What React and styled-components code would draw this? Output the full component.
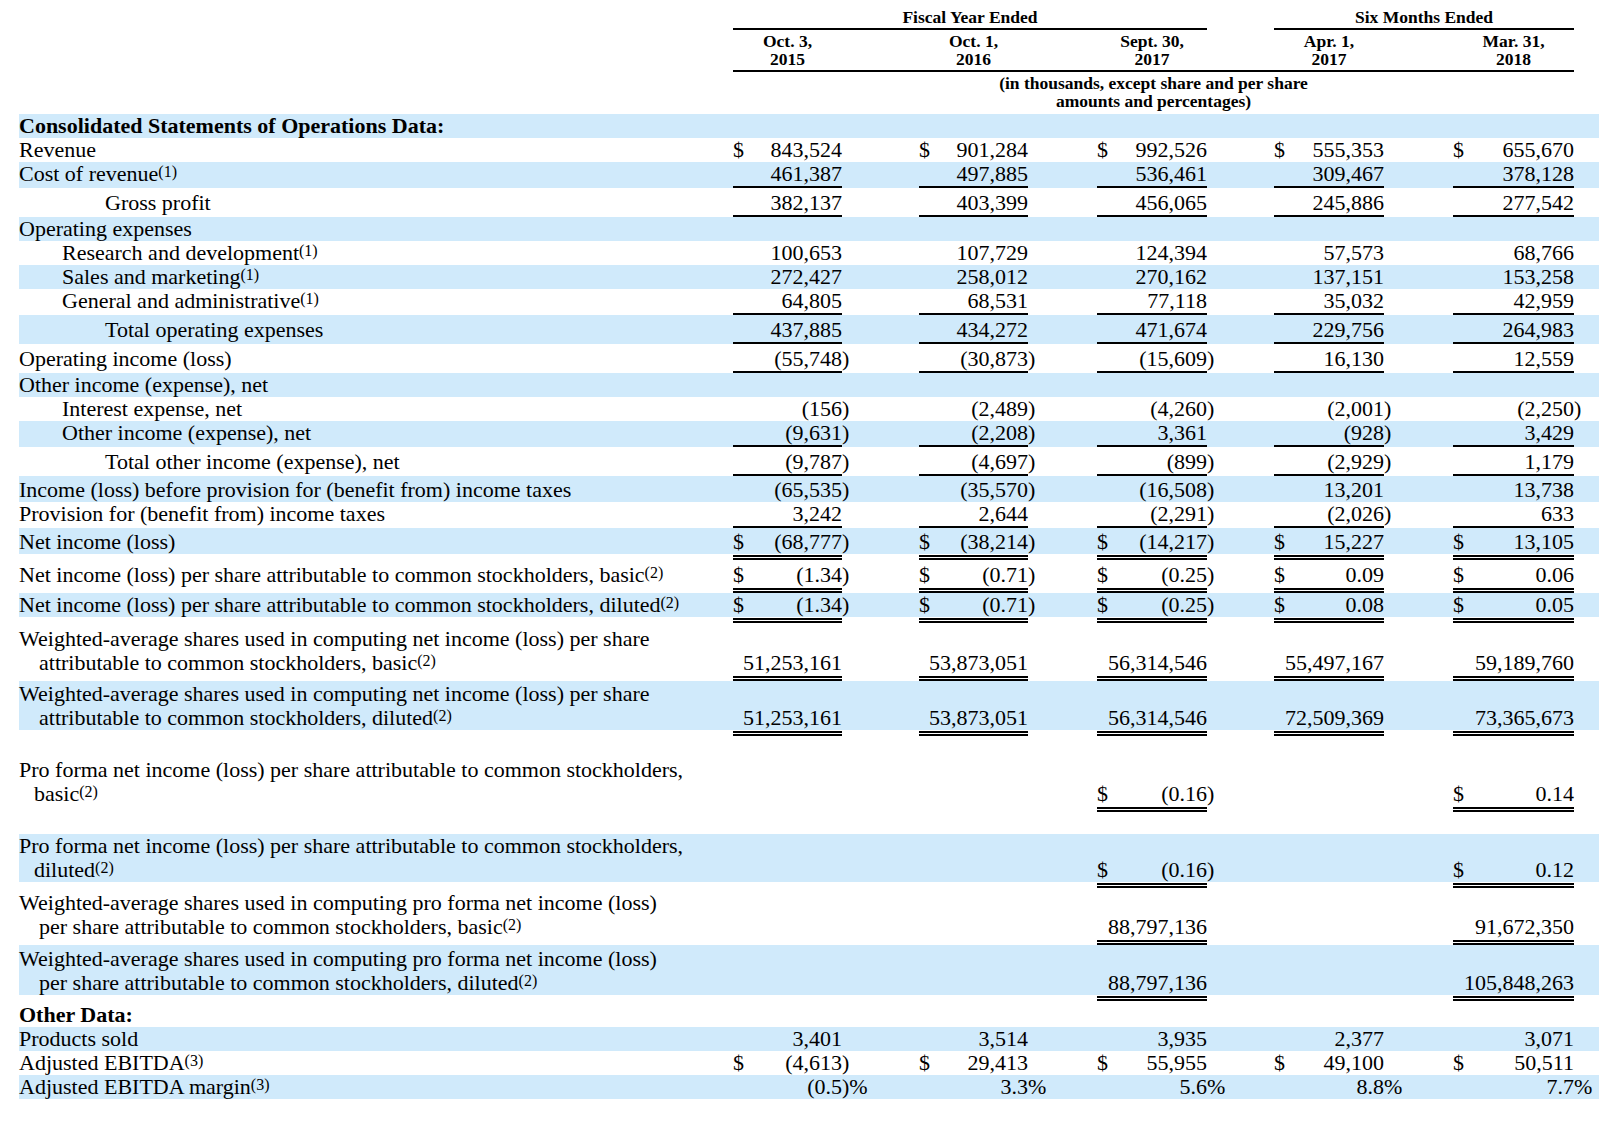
import React from "react";
import styled, { createGlobalStyle } from "styled-components";

const BAND = "#d0eafb";
// label | (amount, suffix, gap) x4 | amount, suffix
const COLS =
  "714px 109px 28px 49px 109px 28px 41px 110px 28px 39px 110px 28px 41px 121px 25px";
const AMOUNT_COLS = [2, 5, 8, 11, 14];

const PERIODS = [
  ["Oct. 3,", "2015"],
  ["Oct. 1,", "2016"],
  ["Sept. 30,", "2017"],
  ["Apr. 1,", "2017"],
  ["Mar. 31,", "2018"]
];

const ROWS = [
  { label: ["Consolidated Statements of Operations Data:"], bold: true, band: true },
  { label: ["Revenue"], dollar: true, values: ["843,524", "901,284", "992,526", "555,353", "655,670"] },
  { label: ["Cost of revenue"], note: "(1)", band: true, rule: "single", values: ["461,387", "497,885", "536,461", "309,467", "378,128"] },
  { label: ["Gross profit"], indent: 86, pt: 3, rule: "single", values: ["382,137", "403,399", "456,065", "245,886", "277,542"] },
  { label: ["Operating expenses"], band: true },
  { label: ["Research and development"], note: "(1)", indent: 43, values: ["100,653", "107,729", "124,394", "57,573", "68,766"] },
  { label: ["Sales and marketing"], note: "(1)", indent: 43, band: true, values: ["272,427", "258,012", "270,162", "137,151", "153,258"] },
  { label: ["General and administrative"], note: "(1)", indent: 43, rule: "single", values: ["64,805", "68,531", "77,118", "35,032", "42,959"] },
  { label: ["Total operating expenses"], indent: 86, band: true, pt: 3, rule: "single", values: ["437,885", "434,272", "471,674", "229,756", "264,983"] },
  { label: ["Operating income (loss)"], pt: 3, rule: "single", values: ["(55,748)", "(30,873)", "(15,609)", "16,130", "12,559"] },
  { label: ["Other income (expense), net"], band: true },
  { label: ["Interest expense, net"], indent: 43, values: ["(156)", "(2,489)", "(4,260)", "(2,001)", "(2,250)"] },
  { label: ["Other income (expense), net"], indent: 43, band: true, rule: "single", values: ["(9,631)", "(2,208)", "3,361", "(928)", "3,429"] },
  { label: ["Total other income (expense), net"], indent: 86, pt: 3, rule: "single", values: ["(9,787)", "(4,697)", "(899)", "(2,929)", "1,179"] },
  { label: ["Income (loss) before provision for (benefit from) income taxes"], band: true, pt: 2, values: ["(65,535)", "(35,570)", "(16,508)", "13,201", "13,738"] },
  { label: ["Provision for (benefit from) income taxes"], rule: "single", values: ["3,242", "2,644", "(2,291)", "(2,026)", "633"] },
  { label: ["Net income (loss)"], band: true, pt: 2, rule: "double", dollar: true, values: ["(68,777)", "(38,214)", "(14,217)", "15,227", "13,105"] },
  { label: ["Net income (loss) per share attributable to common stockholders, basic"], note: "(2)", pt: 3, rule: "double", dollar: true, values: ["(1.34)", "(0.71)", "(0.25)", "0.09", "0.06"] },
  { label: ["Net income (loss) per share attributable to common stockholders, diluted"], note: "(2)", band: true, rule: "double", dollar: true, values: ["(1.34)", "(0.71)", "(0.25)", "0.08", "0.05"] },
  {
    label: ["Weighted-average shares used in computing net income (loss) per share", "attributable to common stockholders, basic"],
    note: "(2)", hang: 20, pt: 4, rule: "double",
    values: ["51,253,161", "53,873,051", "56,314,546", "55,497,167", "59,189,760"]
  },
  {
    label: ["Weighted-average shares used in computing net income (loss) per share", "attributable to common stockholders, diluted"],
    note: "(2)", hang: 20, band: true, pt: 1, rule: "double",
    values: ["51,253,161", "53,873,051", "56,314,546", "72,509,369", "73,365,673"]
  },
  { spacer: 22 },
  {
    label: ["Pro forma net income (loss) per share attributable to common stockholders,", "basic"],
    note: "(2)", hang: 15, rule: "double", dollar: true,
    values: [null, null, "(0.16)", null, "0.14"]
  },
  { spacer: 22 },
  {
    label: ["Pro forma net income (loss) per share attributable to common stockholders,", "diluted"],
    note: "(2)", hang: 15, band: true, rule: "double", dollar: true,
    values: [null, null, "(0.16)", null, "0.12"]
  },
  {
    label: ["Weighted-average shares used in computing pro forma net income (loss)", "per share attributable to common stockholders, basic"],
    note: "(2)", hang: 20, pt: 3, rule: "double",
    values: [null, null, "88,797,136", null, "91,672,350"]
  },
  {
    label: ["Weighted-average shares used in computing pro forma net income (loss)", "per share attributable to common stockholders, diluted"],
    note: "(2)", hang: 20, band: true, pt: 2, rule: "double",
    values: [null, null, "88,797,136", null, "105,848,263"]
  },
  { label: ["Other Data:"], bold: true, pt: 2 },
  { label: ["Products sold"], band: true, values: ["3,401", "3,514", "3,935", "2,377", "3,071"] },
  { label: ["Adjusted EBITDA"], note: "(3)", dollar: true, values: ["(4,613)", "29,413", "55,955", "49,100", "50,511"] },
  { label: ["Adjusted EBITDA margin"], note: "(3)", band: true, values: ["(0.5)%", "3.3%", "5.6%", "8.8%", "7.7%"] }
];

// "(55,748)" -> ["(55,748", ")"], "(0.5)%" -> ["(0.5", ")%"]
const splitValue = v => {
  const m = v.match(/^(.*?)(\)?%?)$/);
  return [m[1], m[2]];
};

const GlobalStyle = createGlobalStyle`
  body {
    margin: 0;
    background: #fff;
    color: #000;
    font-family: "Liberation Serif", "Times New Roman", serif;
  }
`;

const Sheet = styled.div`
  width: 1580px;
  padding: 8px 0 24px 19px;
`;

const HeadRow = styled.div`
  display: grid;
  grid-template-columns: ${COLS};
  padding-top: ${p => p.$pt || 0}px;
  padding-bottom: ${p => p.$pb || 0}px;
  font-size: 17.5px;
  line-height: 18.5px;
  font-weight: bold;
  text-align: center;
`;

const HeadCell = styled.div`
  grid-row: 1;
  grid-column: ${p => p.$span};
  padding-bottom: ${p => (p.$ruled ? 1 : 0)}px;
  border-bottom: ${p => (p.$ruled ? "2px solid #000" : "none")};
`;

const Row = styled.div`
  display: grid;
  grid-template-columns: ${COLS};
  align-items: last baseline;
  padding-top: ${p => p.$pt || 0}px;
  font-size: 22px;
  line-height: 24px;
  background: ${p =>
    p.$band
      ? `linear-gradient(${BAND}, ${BAND}) top left / 100% calc(100% - ${p.$inset}px) no-repeat`
      : "transparent"};
`;

const Label = styled.div`
  grid-row: 1;
  grid-column: 1;
  padding-left: ${p => p.$indent + p.$hang}px;
  text-indent: -${p => p.$hang}px;
  font-weight: ${p => (p.$bold ? "bold" : "normal")};
  white-space: nowrap;
`;

const Note = styled.span`
  font-size: 16px;
  line-height: 0;
  vertical-align: 4px;
`;

const Amount = styled.div`
  grid-row: 1;
  grid-column: ${p => p.$col};
  display: flex;
  justify-content: space-between;
  padding-bottom: ${p => (p.$rule === "double" ? 1 : 0)}px;
  border-bottom: ${p =>
    p.$rule === "double"
      ? "5px double #000"
      : p.$rule === "single"
      ? "2px solid #000"
      : "none"};
`;

const Figure = styled.span`
  margin-left: auto;
  white-space: nowrap;
`;

const Suffix = styled.div`
  grid-row: 1;
  grid-column: ${p => p.$col};
  white-space: nowrap;
`;

const Spacer = styled.div`
  height: ${p => p.$h}px;
`;

const Header = () => (
  <>
    <HeadRow $pt={0}>
      <HeadCell $span="2 / 9" $ruled>
        Fiscal Year Ended
      </HeadCell>
      <HeadCell $span="11 / 15" $ruled>
        Six Months Ended
      </HeadCell>
    </HeadRow>
    <HeadRow $pt={2}>
      {Array.from({ length: 13 }, (_, k) => {
        const col = k + 2;
        const idx = AMOUNT_COLS.indexOf(col);
        return (
          <HeadCell key={col} $span={`${col}`} $ruled>
            {idx >= 0 && (
              <>
                {PERIODS[idx][0]}
                <br />
                {PERIODS[idx][1]}
              </>
            )}
          </HeadCell>
        );
      })}
    </HeadRow>
    <HeadRow $pt={2} $pb={3}>
      <HeadCell $span="2 / 15">
        (in thousands, except share and per share
        <br />
        amounts and percentages)
      </HeadCell>
    </HeadRow>
  </>
);

const DataRow = ({ row }) => (
  <Row
    $band={row.band}
    $pt={row.pt}
    $inset={row.rule === "double" ? 6 : 0}
  >
    <Label $indent={row.indent || 0} $hang={row.hang || 0} $bold={row.bold}>
      {row.label.map((line, i) => (
        <React.Fragment key={i}>
          {i > 0 && <br />}
          {line}
        </React.Fragment>
      ))}
      {row.note && <Note>{row.note}</Note>}
    </Label>
    {(row.values || []).map((v, i) => {
      if (v == null) return null;
      const [fig, tail] = splitValue(v);
      const col = AMOUNT_COLS[i];
      return (
        <React.Fragment key={i}>
          <Amount $col={col} $rule={row.rule}>
            {row.dollar && <span>$</span>}
            <Figure>{fig}</Figure>
          </Amount>
          {tail && <Suffix $col={col + 1}>{tail}</Suffix>}
        </React.Fragment>
      );
    })}
  </Row>
);

const App = () => (
  <>
    <GlobalStyle />
    <Sheet>
      <Header />
      {ROWS.map((row, i) =>
        row.spacer ? (
          <Spacer key={i} $h={row.spacer} />
        ) : (
          <DataRow key={i} row={row} />
        )
      )}
    </Sheet>
  </>
);

export default App;
